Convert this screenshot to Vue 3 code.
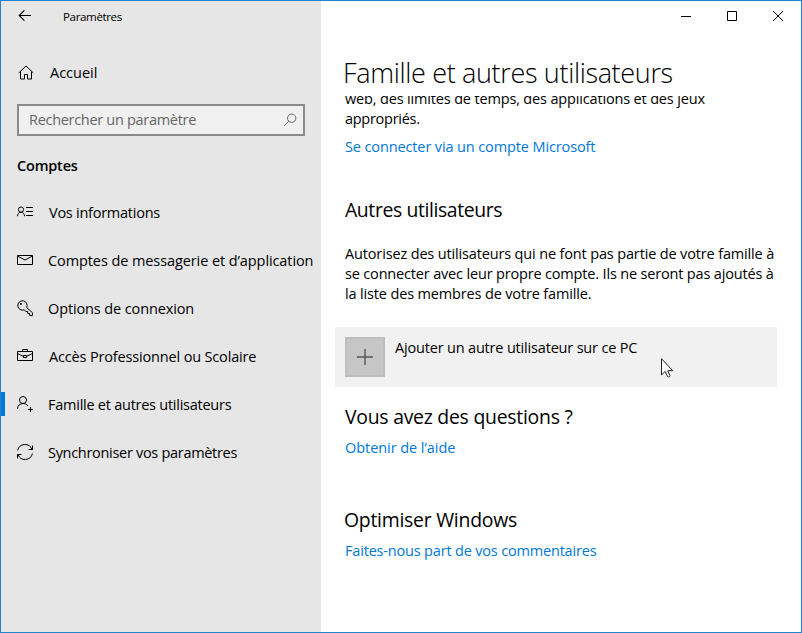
<script setup>
const items = [
  { icon: 'contact', label: 'Vos informations', fit: 'f25 in1' },
  { icon: 'mail', label: 'Comptes de messagerie et d’application', fit: 'f09' },
  { icon: 'key', label: 'Options de connexion', fit: 'f12' },
  { icon: 'case', label: 'Accès Professionnel ou Scolaire', fit: 'f16 in1' },
  { icon: 'family', label: 'Famille et autres utilisateurs', fit: 'f25', active: true },
  { icon: 'sync', label: 'Synchroniser vos paramètres', fit: 'f30' },
]
</script>

<template>
  <div class="window">
    <aside class="sidebar">
      <header class="titlebar">
        <svg class="back" viewBox="0 0 14 12" width="14" height="12"><path d="M13 5.500H1.200M6.400.300L1.200 5.500l5.200 5.200" /></svg>
        <span class="app-name">Paramètres</span>
      </header>

      <div class="home">
        <svg viewBox="0 0 16 16" width="16" height="16"><path d="M.8 7.800L8 1l7.200 6.800M2.500 6.500v7.500h4V9.500h3V14h4V6.500" /></svg>
        <span>Accueil</span>
      </div>

      <div class="search">
        <span class="f30">Rechercher un paramètre</span>
        <svg viewBox="0 0 14 14" width="14" height="14"><circle cx="8.700" cy="5.200" r="4.200" /><path d="M5.700 8.200L1 13" /></svg>
      </div>

      <h2 class="section">Comptes</h2>

      <nav>
        <a v-for="item in items" :key="item.icon" class="item" :class="{ active: item.active }">
          <svg v-if="item.icon === 'contact'" viewBox="0 0 16 16" width="16" height="16">
            <circle cx="4" cy="5.600" r="2.600" /><path d="M.5 12.200c0-2.400 1.500-4 3.500-4s3.500 1.600 3.500 4M9 3.500h7M9 7.500h7M9 11.500h7" />
          </svg>
          <svg v-else-if="item.icon === 'mail'" viewBox="0 0 16 16" width="16" height="16">
            <path d="M.5 3.500h15v9H.5zM.5 4l7.500 4 7.500-4" />
          </svg>
          <svg v-else-if="item.icon === 'key'" viewBox="0 0 16 16" width="16" height="16">
            <path d="M9.700 7.500l5.800 5.300v2.700h-2.800v-2h-2v-2H8.800L7.300 9.800A4.700 4.700 0 1 1 9.700 7.500z" /><circle class="solid" cx="3.900" cy="3.900" r=".6" />
          </svg>
          <svg v-else-if="item.icon === 'case'" viewBox="0 0 16 16" width="16" height="16">
            <path d="M.5 3.500h15v9H.5zM5.500 3.500v-2h5v2M.5 5.500L6 8.200M15.500 5.500L10 8.200M6.500 7.500h3v2h-3z" />
          </svg>
          <svg v-else-if="item.icon === 'family'" viewBox="0 0 16 16" width="16" height="16">
            <circle cx="6" cy="4" r="3.500" /><path d="M.5 13c0-3.300 2.300-5.500 5.500-5.500 2.300 0 4 1 4.900 2.600M13.500 11v5M11 13.500h5" />
          </svg>
          <svg v-else viewBox="0 0 16 16" width="16" height="16">
            <path d="M.6 6.500A7.500 7.500 0 0 1 15 5.500M15.400 9.500A7.500 7.500 0 0 1 1 10.500M15.500 1.500v4h-4M.5 14.500v-4h4" />
          </svg>
          <span :class="item.fit">{{ item.label }}</span>
        </a>
      </nav>
    </aside>

    <main class="content">
      <div class="controls">
        <svg viewBox="0 0 10 10" width="10" height="10"><path d="M0 5.500h10" /></svg>
        <svg viewBox="0 0 10 10" width="10" height="10"><path d="M.5.500h9v9h-9z" /></svg>
        <svg viewBox="0 0 10 10" width="10" height="10"><path d="M0 0l10 10M10 0L0 10" /></svg>
      </div>
      <h1>Famille et autres utilisateurs</h1>

      <div class="scroll">
        <p class="intro">
          <span class="f16">web, des limites de temps, des applications et des jeux</span><br />
          <span class="f28">appropriés.</span>
        </p>
        <a class="link f12 connect">Se connecter via un compte Microsoft</a>

        <h3 class="others">Autres utilisateurs</h3>
        <p class="about">
          <span class="f15">Autorisez des utilisateurs qui ne font pas partie de votre famille à</span><br />
          <span class="f17">se connecter avec leur propre compte. Ils ne seront pas ajoutés à</span><br />
          <span class="f15">la liste des membres de votre famille.</span>
        </p>

        <div class="add-row">
          <span class="plus"><svg viewBox="0 0 16 16" width="16" height="16"><path d="M0 8h16M8 0v16" /></svg></span>
          <span class="add-label f18">Ajouter un autre utilisateur sur ce PC</span>
          <svg class="cursor" viewBox="0 0 13 20" width="13" height="20">
            <path d="M.5.700v16.200l3.700-3.500 2.400 5.200c.9.800 2.500.1 2.300-1.100l-2.200-4.800h5z" />
          </svg>
        </div>

        <h3 class="questions">Vous avez des questions ?</h3>
        <a class="link f06">Obtenir de l’aide</a>

        <h3 class="improve">Optimiser Windows</h3>
        <a class="link f18">Faites-nous part de vos commentaires</a>
      </div>
    </main>
  </div>
</template>

<style>
body {
  background: #fff;
}
</style>

<style scoped>
.window {
  box-sizing: border-box;
  width: 802px;
  height: 633px;
  display: flex;
  border: 1px solid #2482d3;
  background: #fff;
  color: #000;
  font: 14.5px/20px "Open Sans", "Noto Sans", sans-serif;
  overflow: hidden;
  white-space: nowrap;
}
svg {
  display: block;
  flex: none;
  fill: none;
  stroke: #000;
  stroke-width: 1;
}
h1, h2, h3, p {
  margin: 0;
  font-weight: 400;
}
.sidebar {
  width: 320px;
  flex: none;
  background: #e6e6e6;
}
.titlebar {
  height: 30px;
  display: flex;
  align-items: center;
  padding-left: 17px;
}
.back {
  stroke-width: 1.1;
}
.app-name {
  margin-left: 31px;
  font-size: 11.6px;
  letter-spacing: -0.39px;
  padding-top: 1px;
}
.home {
  display: flex;
  align-items: center;
  gap: 15px;
  height: 48px;
  margin-top: 18px;
  padding-left: 17px;
}
.home span {
  padding-left: 1px;
}
.search {
  box-sizing: border-box;
  display: flex;
  align-items: center;
  justify-content: space-between;
  width: 288px;
  height: 32px;
  margin: 7px 0 0 16px;
  padding: 0 6px 0 10px;
  border: 2px solid #8a8a8a;
  background: #f0f0f0;
  color: #666;
}
.search svg {
  stroke: #666;
}
.section {
  height: 20px;
  margin: 20px 0 13px 16px;
  font-size: 14.5px;
  font-weight: 600;
  letter-spacing: -0.2px;
}
.item {
  display: flex;
  align-items: center;
  gap: 15px;
  height: 48px;
  padding-left: 16px;
}
.item svg {
  margin-top: -2px;
}
.solid {
  fill: #000;
}
.item.active {
  padding-left: 12px;
}
.item.active::before {
  content: "";
  width: 4px;
  height: 24px;
  margin: -2px -3px 0 -12px;
  background: #0078d7;
}
.content {
  flex: 1;
  min-width: 0;
}
.controls {
  display: flex;
  justify-content: flex-end;
  gap: 36px;
  padding: 10px 18px 0 0;
}
.controls svg {
  overflow: visible;
}
h1 {
  height: 40px;
  margin: 32px 0 0 22px;
  font-size: 27px;
  line-height: 40px;
  font-weight: 320;
  letter-spacing: -0.34px;
}
.scroll {
  margin-top: 3px;
  padding-left: 24px;
  overflow: hidden;
}
.intro {
  margin: -7px 0 8px;
}
.link {
  display: block;
  color: #0078d7;
}
h3 {
  height: 28px;
  font-size: 19.4px;
  line-height: 28px;
  letter-spacing: -0.25px;
}
.others {
  margin-top: 39px;
  letter-spacing: -0.39px;
}
.about {
  margin-top: 20px;
}
.add-row {
  position: relative;
  box-sizing: border-box;
  display: flex;
  gap: 10px;
  width: 442px;
  height: 60px;
  margin: 23px 0 0 -10px;
  padding: 10px;
  background: #f1f1f1;
}
.plus {
  box-sizing: border-box;
  width: 40px;
  height: 40px;
  display: grid;
  place-items: center;
  border: 2px solid #bebebe;
  background: #c6c6c6;
}
.plus svg {
  stroke: #555;
  stroke-width: 1.4;
}
.add-label {
  margin-top: 1px;
}
.cursor {
  position: absolute;
  left: 326px;
  top: 31px;
  fill: #fff;
  stroke: #222;
}
.questions {
  margin: 16px 0 7px;
}
.improve {
  margin: 48px 0 7px -1px;
}
.in1 { padding-left: 1px; }
.f06 { letter-spacing: -0.06px; }
.f09 { letter-spacing: -0.09px; }
.f12 { letter-spacing: -0.12px; }
.f15 { letter-spacing: -0.15px; }
.f16 { letter-spacing: -0.16px; }
.f17 { letter-spacing: -0.17px; }
.f18 { letter-spacing: -0.18px; }
.f25 { letter-spacing: -0.25px; }
.f28 { letter-spacing: -0.28px; }
.f30 { letter-spacing: -0.3px; }
</style>
